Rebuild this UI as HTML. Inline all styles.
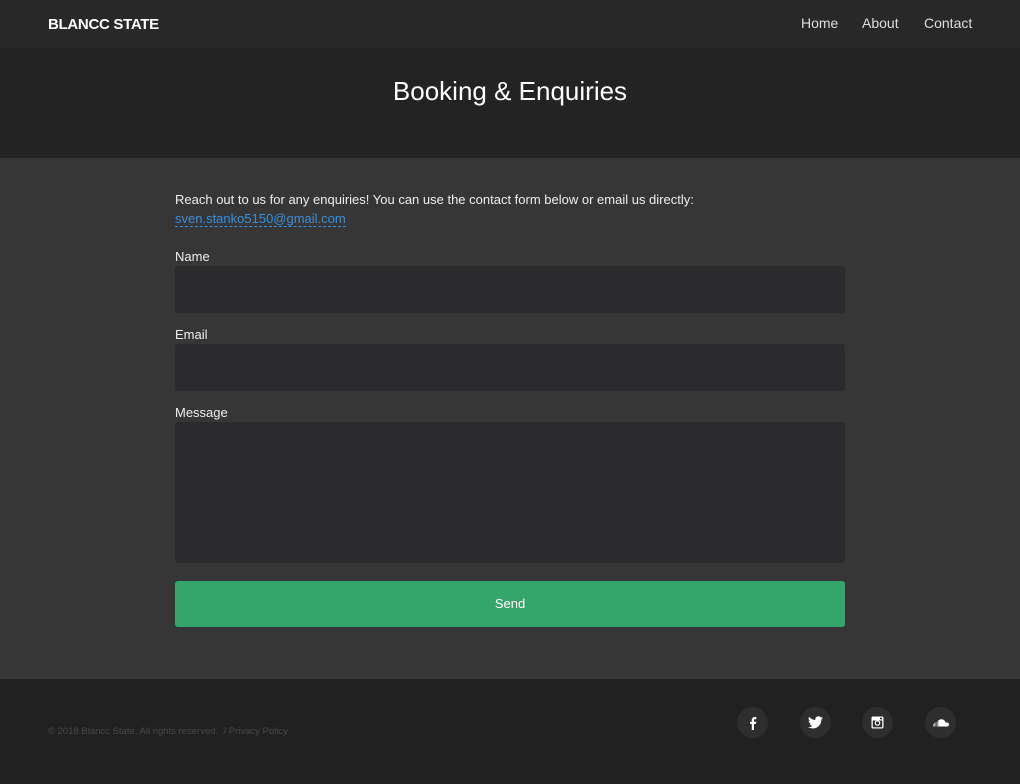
<!DOCTYPE html>
<html><head><meta charset="utf-8">
<style>
*{box-sizing:border-box;margin:0;padding:0}
body{width:1020px;height:784px;background:#363636;font-family:"Liberation Sans",sans-serif;color:#eee;overflow:hidden;position:relative}
.hdr{position:absolute;left:0;top:0;width:1020px;height:48px;background:#282828}
.logo{position:absolute;left:48px;top:16px;font-size:15px;font-weight:bold;color:#fff;letter-spacing:-0.3px}
.nav{position:absolute;top:15px;font-size:14px;color:#ddd}
.hero{position:absolute;left:0;top:48px;width:1020px;height:110px;background:#232323}
.hero h1{position:absolute;width:100%;top:28px;text-align:center;font-weight:normal;font-size:26px;color:#fff}
.intro{position:absolute;left:175px;top:190px;font-size:13px;line-height:19px;color:#eee}
.intro a{color:#3b8fd9;text-decoration:none;border-bottom:1px dashed #3b8fd9}
.lbl{position:absolute;left:175px;font-size:13px;color:#eee}
.in{position:absolute;left:175px;width:670px;background:#2b2a2d;border-radius:3px}
.btn{position:absolute;left:175px;top:581px;width:670px;height:46px;background:#34a56b;border-radius:3px;text-align:center;line-height:46px;font-size:13px;color:#fff}
.ftr{position:absolute;left:0;top:679px;width:1020px;height:105px;background:#212121}
.copy{position:absolute;left:48px;top:47px;font-size:9.5px;color:#484848}
.ic{position:absolute;top:28px;width:31px;height:31px;border-radius:50%;background:#2e2e2e;display:flex;align-items:center;justify-content:center}
</style></head><body>
<div class="hdr">
<div class="logo">BLANCC STATE</div>
<div class="nav" style="left:801px">Home</div>
<div class="nav" style="left:862px">About</div>
<div class="nav" style="left:924px">Contact</div>
</div>
<div class="hero"><h1>Booking &amp; Enquiries</h1></div>
<div class="intro">Reach out to us for any enquiries! You can use the contact form below or email us directly:<br><a>sven.stanko5150@gmail.com</a></div>
<div class="lbl" style="top:249px">Name</div>
<div class="in" style="top:266px;height:47px"></div>
<div class="lbl" style="top:327px">Email</div>
<div class="in" style="top:344px;height:47px"></div>
<div class="lbl" style="top:405px">Message</div>
<div class="in" style="top:422px;height:141px"></div>
<div class="btn">Send</div>
<div class="ftr">
<div class="copy">© 2018 Blancc State. All rights reserved. &nbsp;/ Privacy Policy</div>
<div class="ic" style="left:737px"><svg width="14" height="14" viewBox="0 0 14 14"><path d="M8 14V8h2l.3-2.3H8V4.3c0-.7.2-1.1 1.1-1.1h1.2V1.1C10 1 9.4 1 8.7 1 7 1 5.8 2 5.8 3.9v1.8H4V8h1.8v6z" fill="#fff"/></svg></div>
<div class="ic" style="left:800px"><svg width="15" height="13" viewBox="0 0 24 20"><path d="M24 2.4a9.8 9.8 0 0 1-2.8.8A4.9 4.9 0 0 0 23.3.5a9.9 9.9 0 0 1-3.1 1.2A4.9 4.9 0 0 0 11.8 6 14 14 0 0 1 1.7.9a4.9 4.9 0 0 0 1.5 6.6A4.9 4.9 0 0 1 1 6.9a4.9 4.9 0 0 0 3.9 4.8 4.9 4.9 0 0 1-2.2.1 4.9 4.9 0 0 0 4.6 3.4A9.9 9.9 0 0 1 0 17.3 14 14 0 0 0 7.5 19.5c9.1 0 14-7.5 14-14v-.6A10 10 0 0 0 24 2.4z" fill="#fff"/></svg></div>
<div class="ic" style="left:862px"><svg width="13" height="13" viewBox="0 0 13 13"><rect x="0.5" y="0.5" width="12" height="12" rx="1.5" fill="#fff"/><rect x="1.8" y="4.5" width="9.4" height="6.8" fill="#2e2e2e"/><circle cx="6.5" cy="7" r="2.8" fill="#fff"/><circle cx="6.5" cy="7" r="1.6" fill="#2e2e2e"/><rect x="9" y="1.7" width="2" height="1.6" fill="#2e2e2e"/></svg></div>
<div class="ic" style="left:925px"><svg width="16" height="8" viewBox="0 0 16 8"><path d="M0 7.5V5h.6v2.5zM1.3 7.5V4h.6v3.5zM2.6 7.5V3.5h.6v4zM3.9 7.5V2.5h.6v5zM5.2 7.5V1.5c.9-.8 2-1.3 3.3-1.3 2.1 0 3.8 1.5 4.1 3.5.4-.2.8-.3 1.2-.3A2.1 2.1 0 0 1 16 5.5 2 2 0 0 1 13.8 7.5z" fill="#fff"/></svg></div>
</div>
</body></html>
